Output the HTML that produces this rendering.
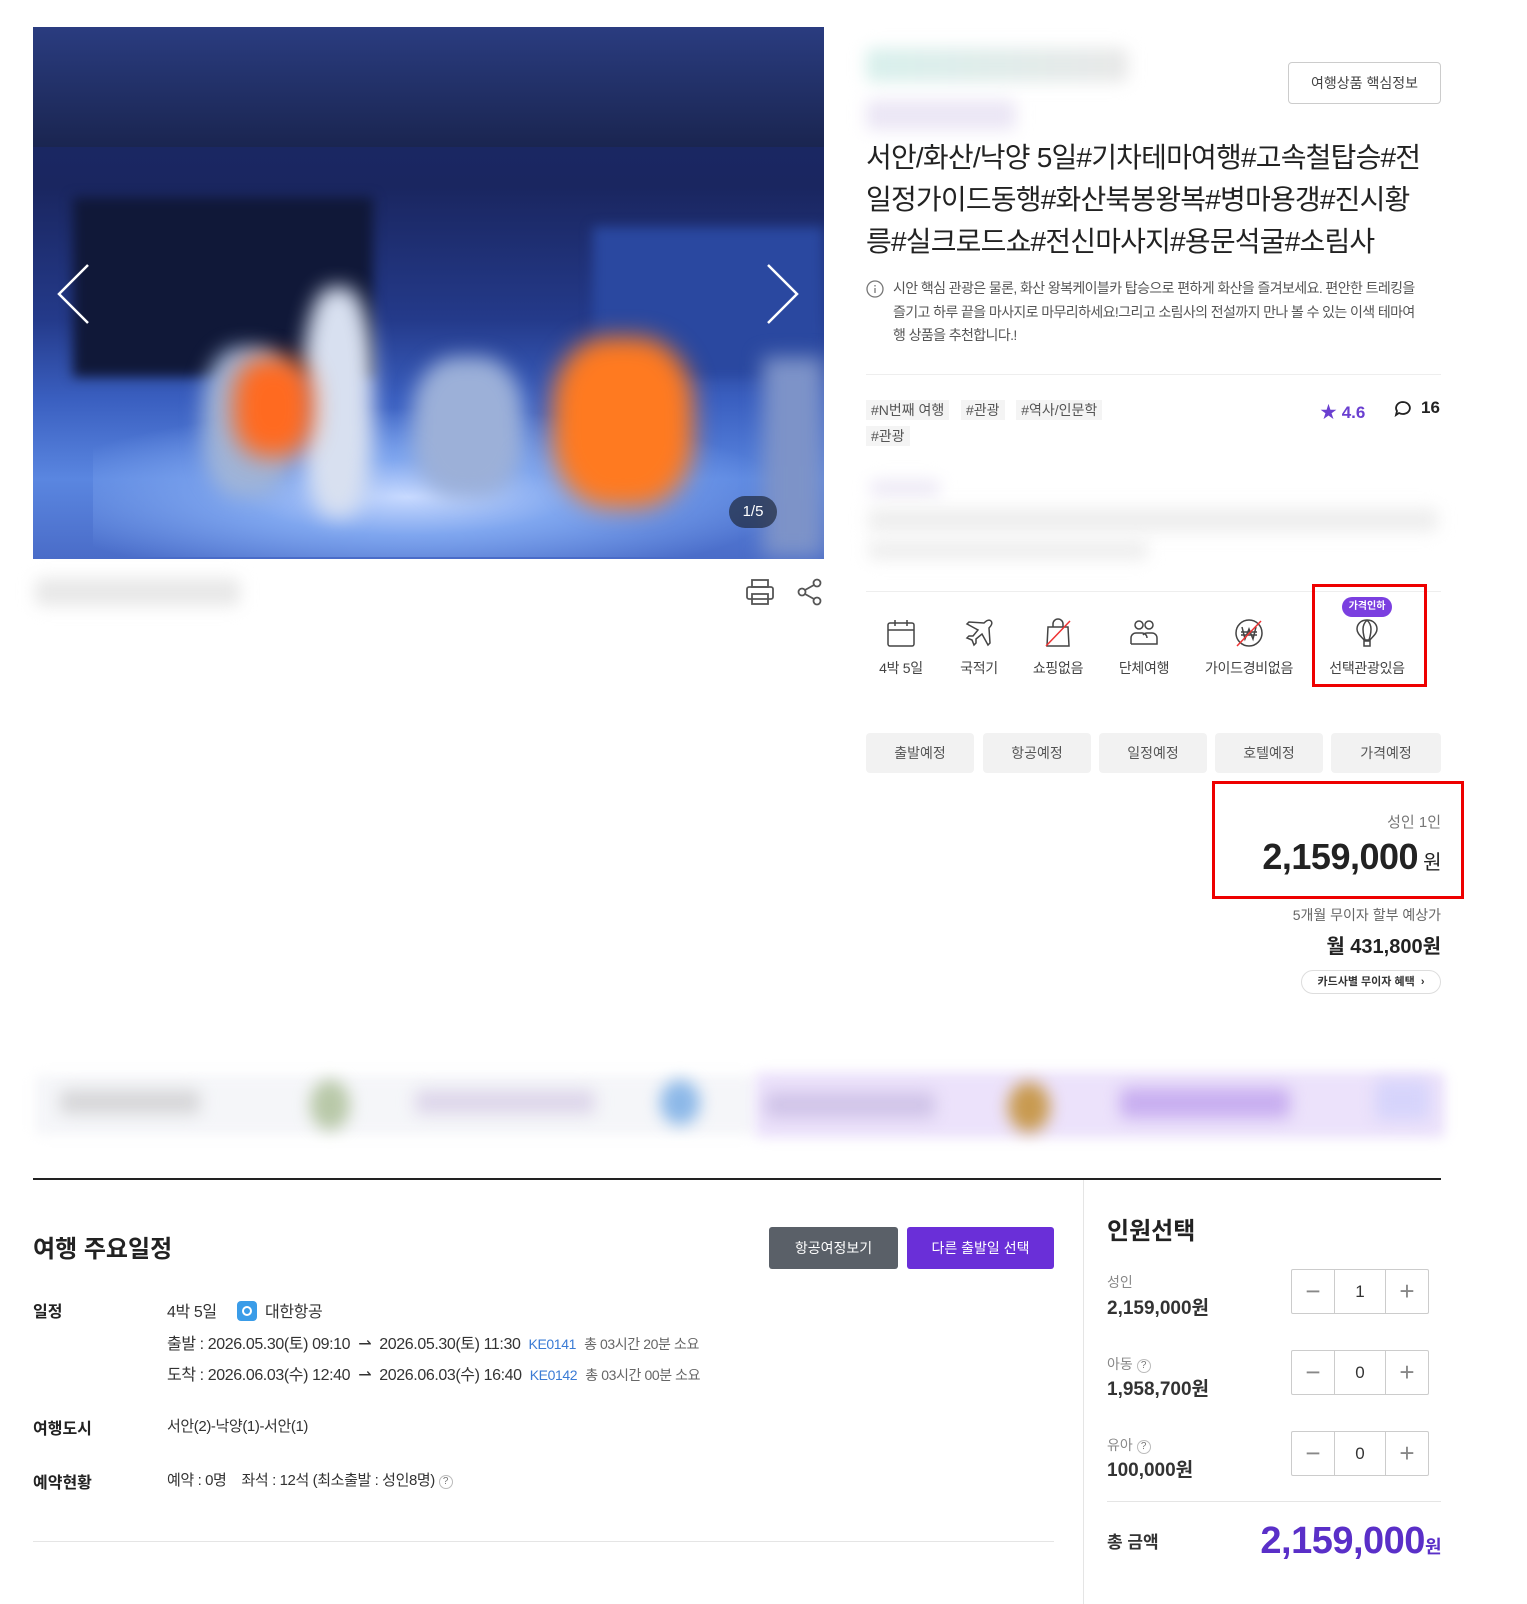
<!DOCTYPE html>
<html lang="ko"><head><meta charset="utf-8">
<style>
*{box-sizing:border-box;margin:0;padding:0}
body{width:1527px;height:1604px;position:relative;background:#fff;font-family:"Liberation Sans","Noto Sans CJK KR",sans-serif;color:#222;overflow:hidden}
.a{position:absolute}
.blur{position:absolute;filter:blur(8px);border-radius:6px}
.ic{position:absolute;text-align:center;font-size:14px;color:#444;width:90px;letter-spacing:-0.3px}
.ic svg{display:block;margin:0 auto 10px}
.tab{position:absolute;top:733px;height:40px;width:108px;background:#f2f2f2;border-radius:4px;font-size:14px;color:#555;text-align:center;line-height:40px}
.lbl{position:absolute;left:33px;font-size:16px;font-weight:bold;color:#222}
.val{position:absolute;left:167px;font-size:16px;color:#333;letter-spacing:-0.4px;white-space:nowrap}
.cnt{position:absolute;left:1291px;width:138px;height:45px;border:1px solid #ccc;border-radius:2px;display:flex}
.cnt div{display:flex;align-items:center;justify-content:center;font-size:17px;color:#333}
.cnt .m,.cnt .p{width:42px;font-size:26px;color:#888;font-weight:200}
.cnt .n{flex:1;border-left:1px solid #ccc;border-right:1px solid #ccc}
.q{display:inline-block;width:14px;height:14px;border:1px solid #bbb;border-radius:50%;font-size:10px;line-height:12px;text-align:center;color:#777;vertical-align:1px;letter-spacing:0}
</style></head><body>

<!-- photo -->
<div class="a" style="left:33px;top:27px;width:791px;height:532px;overflow:hidden;background:linear-gradient(180deg,#1c2a6a 0%,#1a2660 30%,#243a8a 55%,#3a5fc0 70%,#5a86e0 85%,#4a6cc8 100%)">
  <div class="a" style="left:0;top:0;width:791px;height:120px;background:linear-gradient(180deg,#2a3c80,#1a2550)"></div>
  <div class="a" style="left:40px;top:170px;width:300px;height:180px;background:#101838;filter:blur(6px)"></div>
  <div class="a" style="left:560px;top:200px;width:231px;height:150px;background:#2a48a0;filter:blur(6px)"></div>
  <div class="a" style="left:60px;top:380px;width:700px;height:150px;background:radial-gradient(ellipse at 45% 60%,#c8daff 0%,#7fa6ef 30%,rgba(70,110,210,0) 70%)"></div>
  <div class="a" style="left:170px;top:320px;width:90px;height:150px;background:#9fb4d8;filter:blur(10px);border-radius:40%"></div>
  <div class="a" style="left:270px;top:260px;width:70px;height:230px;background:#d8e0f0;filter:blur(10px);border-radius:40%"></div>
  <div class="a" style="left:380px;top:330px;width:110px;height:140px;background:#9cb0d8;filter:blur(10px);border-radius:40%"></div>
  <div class="a" style="left:520px;top:310px;width:140px;height:170px;background:#ff7a20;filter:blur(12px);border-radius:40%"></div>
  <div class="a" style="left:200px;top:330px;width:80px;height:100px;background:#ff6a20;filter:blur(12px);border-radius:40%"></div>
  <div class="a" style="left:730px;top:330px;width:61px;height:200px;background:#7d93c8;filter:blur(10px)"></div>
  <svg class="a" style="left:22px;top:236px" width="36" height="62"><path d="M33 2 4 31 33 60" fill="none" stroke="#fff" stroke-width="2.5"/></svg>
  <svg class="a" style="left:732px;top:236px" width="36" height="62"><path d="M3 2 32 31 3 60" fill="none" stroke="#fff" stroke-width="2.5"/></svg>
  <div class="a" style="left:696px;top:469px;width:48px;height:32px;border-radius:16px;background:rgba(30,40,60,.7);color:#fff;font-size:15px;text-align:center;line-height:32px">1/5</div>
</div>
<div class="blur" style="left:35px;top:578px;width:205px;height:28px;background:#e8e8e8"></div>
<svg class="a" style="left:745px;top:578px" width="30" height="28" fill="none" stroke="#555" stroke-width="1.8"><rect x="7" y="2" width="16" height="7"/><rect x="2" y="9" width="26" height="12" rx="2"/><rect x="7" y="16" width="16" height="10"/></svg>
<svg class="a" style="left:796px;top:578px" width="28" height="28" fill="none" stroke="#555" stroke-width="1.8"><circle cx="21" cy="5" r="3.5"/><circle cx="6" cy="14" r="3.5"/><circle cx="21" cy="23" r="3.5"/><path d="M9 12 18 7M9 16 18 21"/></svg>

<!-- right column -->
<div class="blur" style="left:866px;top:48px;width:262px;height:34px;background:linear-gradient(90deg,#d8f0ec,#e8e8e8)"></div>
<div class="blur" style="left:866px;top:100px;width:150px;height:30px;background:#ebe6f5"></div>
<div class="a" style="left:1288px;top:62px;width:153px;height:42px;border:1px solid #ccc;border-radius:4px;font-size:14px;color:#444;text-align:center;line-height:40px">여행상품 핵심정보</div>
<div class="a" style="left:866px;top:137px;width:600px;font-size:28px;line-height:42px;color:#222;letter-spacing:-0.8px;white-space:nowrap">서안/화산/낙양 5일#기차테마여행#고속철탑승#전<br>일정가이드동행#화산북봉왕복#병마용갱#진시황<br>릉#실크로드쇼#전신마사지#용문석굴#소림사</div>
<svg class="a" style="left:866px;top:280px" width="18" height="18" fill="none" stroke="#777" stroke-width="1.3"><circle cx="9" cy="9" r="8"/><path d="M9 8v5M9 5v1.5"/></svg>
<div class="a" style="left:893px;top:277px;width:560px;font-size:14px;line-height:23.5px;color:#555;letter-spacing:-0.6px;white-space:nowrap">시안 핵심 관광은 물론, 화산 왕복케이블카 탑승으로 편하게 화산을 즐겨보세요. 편안한 트레킹을<br>즐기고 하루 끝을 마사지로 마무리하세요!그리고 소림사의 전설까지 만나 볼 수 있는 이색 테마여<br>행 상품을 추천합니다.!</div>
<div class="a" style="left:866px;top:374px;width:575px;height:1px;background:#eee"></div>
<div class="a" style="left:866px;top:397px;font-size:14px;color:#555;line-height:26px">
<span style="background:#f4f4f4;padding:2px 5px">#N번째 여행</span>&nbsp;&nbsp;&nbsp;<span style="background:#f4f4f4;padding:2px 5px">#관광</span>&nbsp;&nbsp;&nbsp;<span style="background:#f4f4f4;padding:2px 5px">#역사/인문학</span><br><span style="background:#f4f4f4;padding:2px 5px">#관광</span></div>
<div class="a" style="left:1320px;top:398px;font-size:17px;color:#6a3fd0;font-weight:bold">★ 4.6</div>
<svg class="a" style="left:1394px;top:400px" width="18" height="17" fill="none" stroke="#222" stroke-width="1.8"><path d="M9 2a7 6 0 1 1-4 11L2 15l1-4A7 6 0 0 1 9 2z"/></svg>
<div class="a" style="left:1421px;top:398px;font-size:17px;font-weight:bold;color:#222">16</div>
<div class="blur" style="left:870px;top:480px;width:70px;height:16px;background:#ece8f5"></div>
<div class="blur" style="left:868px;top:508px;width:570px;height:24px;background:#eeeeee"></div>
<div class="blur" style="left:868px;top:540px;width:280px;height:20px;background:#eeeeee"></div>
<div class="a" style="left:866px;top:591px;width:575px;height:1px;background:#eee"></div>

<!-- icons -->
<div class="ic" style="left:856px;top:618px"><svg width="30" height="30" fill="none" stroke="#444" stroke-width="1.5"><rect x="2" y="5" width="26" height="23" rx="2"/><path d="M2 12h26M9 2v6M21 2v6"/></svg>4박 5일</div>
<div class="ic" style="left:934px;top:618px"><svg width="30" height="30" fill="none" stroke="#444" stroke-width="1.5"><path d="M27 3c-2-2-5 0-7 2L5 4 3 6l11 6-5 6-4 0-2 2 5 2 2 5 2-2v-4l6-5 6 11 2-2-1-15c2-2 4-5 2-7z"/></svg>국적기</div>
<div class="ic" style="left:1013px;top:618px"><svg width="30" height="30" fill="none" stroke="#444" stroke-width="1.5"><path d="M5 9h20l1 19H4zM10 9V6a5 5 0 0 1 10 0v3"/><path d="M3 28 27 3" stroke="#e33"/></svg>쇼핑없음</div>
<div class="ic" style="left:1099px;top:618px"><svg width="30" height="30" fill="none" stroke="#444" stroke-width="1.5"><circle cx="10" cy="7" r="4"/><circle cx="20" cy="7" r="4"/><path d="M2 26v-6a5 5 0 0 1 5-5h6a5 5 0 0 1 5 5M14 17a5 5 0 0 1 4-2h5a5 5 0 0 1 5 5v6H2"/></svg>단체여행</div>
<div class="ic" style="left:1194px;top:618px;width:110px"><svg width="30" height="30" fill="none" stroke="#444" stroke-width="1.5"><circle cx="15" cy="15" r="13"/><path d="M8 9l3 12 4-10 4 10 3-12M7 14h16M7 17h16"/><path d="M3 28 27 3" stroke="#e33"/></svg>가이드경비없음</div>
<div class="ic" style="left:1322px;top:618px"><svg width="30" height="30" fill="none" stroke="#444" stroke-width="1.5"><path d="M15 2C8 2 5 7 5 11c0 5 5 8 7 11h6c2-3 7-6 7-11 0-4-3-9-10-9zM15 2c-3 3-4 6-4 9s1 8 2 11M15 2c3 3 4 6 4 9s-1 8-2 11"/><rect x="12" y="23" width="6" height="5"/></svg>선택관광있음</div>
<div class="a" style="left:1342px;top:597px;width:50px;height:20px;border-radius:10px;background:#7b3fe0;color:#fff;font-size:10px;font-weight:bold;text-align:center;line-height:20px">가격인하</div>
<div class="a" style="left:1312px;top:584px;width:115px;height:103px;border:3px solid #e00"></div>

<!-- tabs -->
<div class="tab" style="left:866px">출발예정</div>
<div class="tab" style="left:983px">항공예정</div>
<div class="tab" style="left:1099px">일정예정</div>
<div class="tab" style="left:1215px">호텔예정</div>
<div class="tab" style="left:1331px;width:110px">가격예정</div>

<!-- price -->
<div class="a" style="left:1212px;top:781px;width:252px;height:118px;border:3px solid #e00"></div>
<div class="a" style="left:1300px;top:811px;width:141px;text-align:right;font-size:15px;color:#777">성인 1인</div>
<div class="a" style="left:1200px;top:836px;width:241px;text-align:right;font-size:36px;font-weight:bold;color:#222;letter-spacing:-0.5px">2,159,000<span style="font-size:20px;font-weight:normal"> 원</span></div>
<div class="a" style="left:1200px;top:905px;width:241px;text-align:right;font-size:14px;color:#666">5개월 무이자 할부 예상가</div>
<div class="a" style="left:1200px;top:930px;width:241px;text-align:right;font-size:20px;font-weight:bold;color:#222">월 431,800원</div>
<div class="a" style="left:1301px;top:970px;width:140px;height:24px;border:1px solid #ddd;border-radius:12px;font-size:11px;font-weight:bold;color:#333;text-align:center;line-height:22px">카드사별 무이자 혜택 &nbsp;›</div>

<!-- blurred banner -->
<div class="blur" style="left:35px;top:1075px;width:720px;height:60px;background:#f5f6f9;filter:blur(6px)"></div>
<div class="blur" style="left:60px;top:1090px;width:140px;height:24px;background:#d6d6d8"></div>
<div class="blur" style="left:310px;top:1080px;width:40px;height:50px;background:#b8c8a8;border-radius:50%"></div>
<div class="blur" style="left:415px;top:1090px;width:180px;height:24px;background:#ddd6ea"></div>
<div class="blur" style="left:660px;top:1080px;width:40px;height:45px;background:#8cb8e8;border-radius:50%"></div>
<div class="blur" style="left:755px;top:1072px;width:690px;height:66px;background:#ece2fb;filter:blur(6px)"></div>
<div class="blur" style="left:765px;top:1092px;width:170px;height:26px;background:#d0c4e8"></div>
<div class="blur" style="left:1008px;top:1082px;width:42px;height:50px;background:#c89a50;border-radius:50%"></div>
<div class="blur" style="left:1120px;top:1088px;width:170px;height:30px;background:#c8aef0"></div>
<div class="blur" style="left:1375px;top:1080px;width:55px;height:40px;background:#d6d4fb"></div>

<!-- bottom section -->
<div class="a" style="left:33px;top:1178px;width:1408px;height:2px;background:#222"></div>
<div class="a" style="left:1083px;top:1180px;width:1px;height:424px;background:#e5e5e5"></div>
<div class="a" style="left:33px;top:1229px;font-size:24px;font-weight:bold;color:#222">여행 주요일정</div>
<div class="a" style="left:769px;top:1227px;width:129px;height:42px;border-radius:3px;background:#5a6068;color:#fff;font-size:14px;text-align:center;line-height:42px">항공여정보기</div>
<div class="a" style="left:907px;top:1227px;width:147px;height:42px;border-radius:3px;background:#6a2fd8;color:#fff;font-size:14px;text-align:center;line-height:42px">다른 출발일 선택</div>

<div class="lbl" style="top:1298px">일정</div>
<div class="val" style="top:1298px">4박 5일 &nbsp;&nbsp;&nbsp;&nbsp;<span style="display:inline-block;width:20px;height:20px;border-radius:4px;background:#3a9ce8;vertical-align:-4px;position:relative"><span style="position:absolute;left:5px;top:5px;width:10px;height:10px;border:2px solid #fff;border-radius:50%"></span></span>&nbsp; 대한항공</div>
<div class="val" style="top:1330px">출발 : 2026.05.30(토) 09:10 &nbsp;⇀&nbsp; 2026.05.30(토) 11:30 &nbsp;<span style="color:#3a7bd5;font-size:14px">KE0141</span> &nbsp;<span style="color:#666;font-size:14px">총 03시간 20분 소요</span></div>
<div class="val" style="top:1361px">도착 : 2026.06.03(수) 12:40 &nbsp;⇀&nbsp; 2026.06.03(수) 16:40 &nbsp;<span style="color:#3a7bd5;font-size:14px">KE0142</span> &nbsp;<span style="color:#666;font-size:14px">총 03시간 00분 소요</span></div>
<div class="lbl" style="top:1415px">여행도시</div>
<div class="val" style="top:1415px;font-size:15px">서안(2)-낙양(1)-서안(1)</div>
<div class="lbl" style="top:1469px">예약현황</div>
<div class="val" style="top:1469px;font-size:15px">예약 : 0명 &nbsp;&nbsp;&nbsp;좌석 : 12석 (최소출발 : 성인8명) <span class="q">?</span></div>
<div class="a" style="left:33px;top:1541px;width:1021px;height:1px;background:#e5e5e5"></div>

<div class="a" style="left:1107px;top:1211px;font-size:24px;font-weight:bold;color:#222">인원선택</div>
<div class="a" style="left:1107px;top:1272px;font-size:14px;color:#888">성인</div>
<div class="a" style="left:1107px;top:1293px;font-size:19px;font-weight:bold;color:#333">2,159,000원</div>
<div class="cnt" style="top:1269px"><div class="m">−</div><div class="n">1</div><div class="p">+</div></div>
<div class="a" style="left:1107px;top:1354px;font-size:14px;color:#888">아동 <span class="q">?</span></div>
<div class="a" style="left:1107px;top:1374px;font-size:19px;font-weight:bold;color:#333">1,958,700원</div>
<div class="cnt" style="top:1350px"><div class="m">−</div><div class="n">0</div><div class="p">+</div></div>
<div class="a" style="left:1107px;top:1435px;font-size:14px;color:#888">유아 <span class="q">?</span></div>
<div class="a" style="left:1107px;top:1455px;font-size:19px;font-weight:bold;color:#333">100,000원</div>
<div class="cnt" style="top:1431px"><div class="m">−</div><div class="n">0</div><div class="p">+</div></div>
<div class="a" style="left:1107px;top:1501px;width:334px;height:1px;background:#e5e5e5"></div>
<div class="a" style="left:1107px;top:1528px;font-size:17px;font-weight:bold;color:#333">총 금액</div>
<div class="a" style="left:1200px;top:1520px;width:241px;text-align:right;font-size:38px;font-weight:bold;color:#5a2fc8;letter-spacing:-0.5px">2,159,000<span style="font-size:18px">원</span></div>
</body></html>
